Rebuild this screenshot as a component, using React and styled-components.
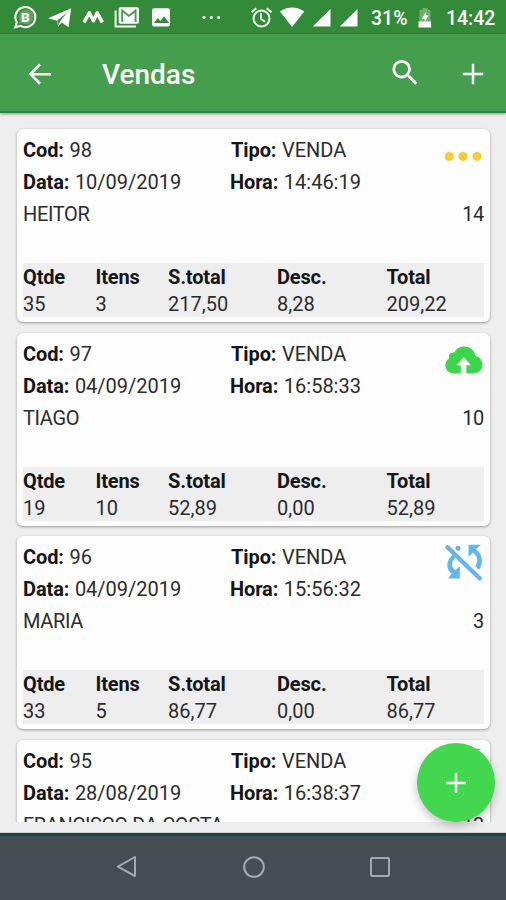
import React from 'react';
import styled, { createGlobalStyle } from 'styled-components';

const Global = createGlobalStyle`
  * { box-sizing: border-box; }
  body { margin: 0; background: #efeeef; font-family: Roboto, "Liberation Sans", sans-serif; }
`;

const Screen = styled.div`
  position: relative;
  width: 506px;
  height: 900px;
  overflow: hidden;
  display: flex;
  flex-direction: column;
  background: #efeeef;
  color: #2b2c2d;
`;

const StatusBar = styled.div`
  height: 34px;
  flex: none;
  background: #338a38;
`;

const StatusSvg = styled.svg`
  display: block;
  fill: #fff;
  font-family: Roboto, sans-serif;
  font-weight: 500;
`;

const AppBar = styled.header`
  height: 79px;
  flex: none;
  display: flex;
  align-items: center;
  padding: 3px 18px 0 25px;
  background: #459e4d;
  border-bottom: 2px solid #23893a;
  box-shadow: 0 1px 3px rgba(0, 0, 0, 0.4);
  z-index: 1;
  color: #fff;
`;

const Title = styled.h1`
  flex: 1;
  margin: 1px 0 0 47px;
  font-size: 28px;
  line-height: 36px;
  font-weight: 500;
`;

const BarIcon = styled.svg`
  width: 30px;
  height: 30px;
  fill: #fff;
  margin-left: ${(p) => p.$gap || 0}px;
`;

const List = styled.main`
  height: 709px;
  flex: none;
  overflow: hidden;
  padding: 16px 16px 0 17px;
  display: flex;
  flex-direction: column;
  gap: 10.5px;
`;

const Card = styled.article`
  height: 193px;
  flex: none;
  display: flex;
  flex-direction: column;
  padding: 5px 6px 5px;
  border-radius: 6px;
  background: #fdfdfd;
  box-shadow: 0 1px 3px rgba(0, 0, 0, 0.36);
`;

const Head = styled.div`
  display: grid;
  grid-template-columns: 207px 1fr 40px;
  grid-template-rows: 32.4px 32.4px;
  height: 64.4px;
  font-size: 20px;
  white-space: nowrap;
`;

const Field = styled.div`
  line-height: 32px;
  padding-left: ${(p) => p.$indent || 0}px;
  b { font-weight: 700; letter-spacing: -0.1px; color: #141516; margin-right: 0.6px; }
`;

const StatusMark = styled.div`
  grid-column: 3;
  grid-row: 1 / 3;
  height: 44px;
  display: flex;
  justify-content: flex-end;
  svg { display: block; flex: none; overflow: visible; }
`;

const Client = styled.div`
  display: flex;
  justify-content: space-between;
  height: 64px;
  font-size: 20px;
  line-height: 32px;
  letter-spacing: -0.35px;
`;

const Totals = styled.div`
  height: 54px;
  display: grid;
  grid-template-columns: 72.5px 72.5px 109px 109.5px 1fr;
  background: #eeeeee;
  font-size: 20px;
  line-height: 27px;
  margin-top: auto;
`;

const Amount = styled.div`
  display: flex;
  flex-direction: column;
  b { font-weight: 700; height: 27px; padding-top: 1px; letter-spacing: -0.15px; color: #141516; }
  span { height: 27px; padding-top: 1px; }
`;

const Footer = styled.div`
  height: 11px;
  flex: none;
  border-bottom: 1px solid #d0d3d3;
`;

const NavBar = styled.nav`
  flex: 1;
  display: flex;
  align-items: center;
  justify-content: center;
  gap: 102.5px;
  padding: 0 0 2px 1px;
  background: #454d52;
  border-top: 3px solid #24403d;
`;

const NavIcon = styled.svg`
  width: 24px;
  height: 24px;
  fill: none;
  stroke: #a2aaad;
  stroke-width: 2;
  stroke-linejoin: round;
`;

const Fab = styled.button`
  position: absolute;
  left: 417px;
  top: 743px;
  width: 78px;
  height: 79px;
  padding: 0;
  border: 0;
  border-radius: 50%;
  background: #43d64f;
  box-shadow: 0 4px 8px rgba(0, 0, 0, 0.24);
  display: flex;
  align-items: center;
  justify-content: center;
`;

const Dots = () => (
  <svg width="38" height="38" viewBox="0 0 38 38" fill="#f9c936">
    <circle cx="4.2" cy="22.4" r="4.5" />
    <circle cx="18" cy="22.4" r="4.5" />
    <circle cx="32" cy="22.4" r="4.5" />
  </svg>
);

const CloudUp = () => (
  <svg width="38" height="38" viewBox="0 0 38 38" fill="#3dd54b">
    <path d="M15.8 34.5H8.6C3.8 34.5.3 31 .3 26.6.3 23.2 2 20.7 4.3 19.3 2.8 16 5.6 12.8 9.4 13.5 11 9.8 15 7.5 19.3 7.5c6 0 10.4 4 11.2 9.5 4 .8 6.9 4.300 6.900 8.700 0 4.900-3.900 8.800-8.700 8.800h-7.300V26.300h4.700L18.700 18.300 11.600 26.300h4.200Z" />
  </svg>
);

const SyncOff = () => (
  <svg width="38" height="38" viewBox="0 0 38 38" fill="#62b6ed">
    <path d="M7.5 10.8C.2 17.5 1.2 25.7 6.700 29.600L3.300 34.600H14.800V22.300L10.400 26.300C5.200 22.200 6.400 17.700 10.600 13.400Z" />
    <path d="M23.600.800H36L31 5.200C38.700 11.500 38.200 20.400 34 25.700L30.400 22.200C33.700 17.100 32.600 12.200 27.900 8.600L23.600 13Z" />
    <circle cx="13" cy="4.200" r="2.500" />
    <path d="M2.500 3.300 34.800 34.500" stroke="#62b6ed" strokeWidth="4.200" strokeLinecap="round" />
  </svg>
);

const MarkOffset = styled.div`
  margin-top: ${(p) => p.$top}px;
  margin-right: 1px;
`;

const marks = {
  pending: <MarkOffset $top={0}><Dots /></MarkOffset>,
  sent: <MarkOffset $top={1}><CloudUp /></MarkOffset>,
  offline: <MarkOffset $top={3}><SyncOff /></MarkOffset>,
};

const sales = [
  { cod: 98, data: '10/09/2019', hora: '14:46:19', nome: 'HEITOR', n: 14, mark: 'pending', v: ['35', '3', '217,50', '8,28', '209,22'] },
  { cod: 97, data: '04/09/2019', hora: '16:58:33', nome: 'TIAGO', n: 10, mark: 'sent', v: ['19', '10', '52,89', '0,00', '52,89'] },
  { cod: 96, data: '04/09/2019', hora: '15:56:32', nome: 'MARIA', n: 3, mark: 'offline', v: ['33', '5', '86,77', '0,00', '86,77'] },
  { cod: 95, data: '28/08/2019', hora: '16:38:37', nome: 'FRANCISCO DA COSTA', n: 13, mark: 'offline', v: null },
];
const labels = ['Qtde', 'Itens', 'S.total', 'Desc.', 'Total'];

const StatusIcons = () => (
  <StatusSvg width="506" height="34" viewBox="0 0 506 34">
    <path d="M15.3 27.2 16.8 22.2A10 10 0 1 1 20.5 25.8Z" fill="none" stroke="#fff" strokeWidth="2.1" />
    <path d="M18.7 23.8 19.7 20.6A7.4 7.4 0 1 1 22 23Z" opacity=".22" />
    <text x="21" y="22" fontSize="13.5" fontWeight="900">B</text>
    <path d="M48 18.2 71.2 8.2 68.5 27.2 61.7 22.6 58.3 26.7 57 20.7Z" />
    <path d="m57.2 20.4 10-8-7.2 8.8-1.3 4Z" fill="#338a38" />
    <path d="M84 22.3 89.3 12.8 93.4 20.7 97.2 12.8 102.4 22.3" fill="none" stroke="#fff" strokeWidth="3.5" strokeLinejoin="round" />
    <path d="M115.6 10.5V26.5H136" fill="none" stroke="#fff" strokeWidth="2" />
    <rect x="118.7" y="7.2" width="20.2" height="16.5" rx="1.6" />
    <path d="M122.2 22V10.5l6.7 5.4 6.7-5.4V22" fill="none" stroke="#4d9450" strokeWidth="1.9" />
    <rect x="152" y="8.3" width="18" height="18.2" rx="2" />
    <path d="m153.800 23 4-5 2.700 3 3.600-4.800 5 6.800Z" fill="#338a38" />
    <circle cx="204" cy="17.5" r="1.6" /><circle cx="211.3" cy="17.5" r="1.6" /><circle cx="218.6" cy="17.5" r="1.6" />
    <g fill="none" stroke="#fff" strokeWidth="2">
      <circle cx="261.5" cy="18.500" r="8" />
      <path d="M261 13v6l4.200 2.700" strokeWidth="1.7" />
      <path d="m251.500 12.200 4.800-4M271.500 12.200l-4.800-4" />
    </g>
    <path d="M280 11.500C287.500 6 296.700 6 304.200 11.500L292.100 27Z" />
    <path d="M312.800 26.500 330.500 9v17.500ZM339.800 26.500 357.500 9v17.500Z" />
    <text x="371" y="24.7" fontSize="20" textLength="36.5" lengthAdjust="spacingAndGlyphs">31%</text>
    <path d="M419.500 10h3V8h5v2h3v17h-11Z" fill="#72af75" />
    <path d="M418.500 21.500h12.600v6h-12.600ZM426 12l-4.300 7h3v3l4-7h-2.700Z" />
    <text x="446" y="24.7" fontSize="20" textLength="49.3" lengthAdjust="spacingAndGlyphs">14:42</text>
  </StatusSvg>
);

export default function App() {
  return (
    <>
      <Global />
      <Screen>
        <StatusBar><StatusIcons /></StatusBar>
        <AppBar>
          <BarIcon viewBox="0 0 24 24"><path d="M20.800 11.200H6.800l6-6.200-1.600-1.500L3 12l8.200 8.500 1.600-1.500-6-5.900h14Z" /></BarIcon>
          <Title>Vendas</Title>
          <BarIcon viewBox="0 0 24 24"><path transform="translate(-1.500 -2.700) scale(1.140)" d="M15.5 14h-.79l-.28-.27A6.47 6.47 0 0 0 16 9.5 6.5 6.5 0 1 0 9.5 16c1.61 0 3.09-.59 4.23-1.57l.27.28v.79l5 4.99L20.49 19l-4.99-5zm-6 0C7.01 14 5 11.99 5 9.5S7.01 5 9.5 5 14 7.01 14 9.5 11.99 14 9.5 14z" /></BarIcon>
          <BarIcon $gap={38} viewBox="0 0 24 24"><path d="M20.200 12.900H13v7.200h-2v-7.200H3.800v-2H11V3.700h2v7.200h7.200Z" /></BarIcon>
        </AppBar>
        <List>
          {sales.map((s) => (
            <Card key={s.cod}>
              <Head>
                <Field><b>Cod:</b> {s.cod}</Field>
                <Field $indent={1}><b>Tipo:</b> VENDA</Field>
                <StatusMark>{marks[s.mark]}</StatusMark>
                <Field><b>Data:</b> {s.data}</Field>
                <Field><b>Hora:</b> {s.hora}</Field>
              </Head>
              <Client><span>{s.nome}</span><span>{s.n}</span></Client>
              {s.v && (
                <Totals>
                  {labels.map((l, i) => <Amount key={l}><b>{l}</b><span>{s.v[i]}</span></Amount>)}
                </Totals>
              )}
            </Card>
          ))}
        </List>
        <Footer />
        <NavBar>
          <NavIcon viewBox="0 0 24 24"><path d="M20 2v19L2.800 11.700Z" /></NavIcon>
          <NavIcon viewBox="0 0 24 24"><circle cx="12" cy="12" r="9.800" /></NavIcon>
          <NavIcon viewBox="0 0 24 24"><rect x="3" y="3" width="18" height="18" rx="1" /></NavIcon>
        </NavBar>
        <Fab aria-label="Adicionar">
          <BarIcon viewBox="0 0 24 24"><path d="M20 13h-7v7h-2v-7H4v-2h7V4h2v7h7Z" /></BarIcon>
        </Fab>
      </Screen>
    </>
  );
}
